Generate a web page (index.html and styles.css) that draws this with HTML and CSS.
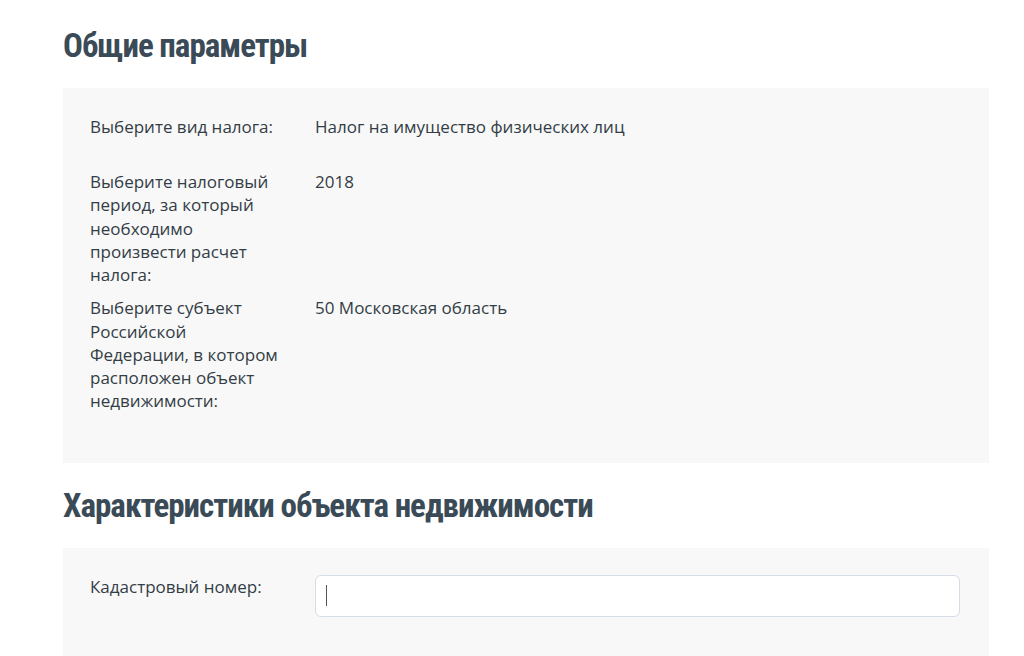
FILE: index.html
```html
<!DOCTYPE html>
<html lang="ru">
	<head>
		<title>Калькулятор налога</title>
		<meta charset="utf-8">
		<link rel="stylesheet" href="styles.css">
	</head>
	<body>
		<div id="calc">
			<h2 class="section-title">Общие параметры</h2>
			<div class="panel">
				<div class="row">
					<div class="label">Выберите вид налога:</div>
					<div class="value">Налог на имущество физических лиц</div>
				</div>
				<div class="row">
					<div class="label">Выберите налоговый период, за который необходимо произвести расчет налога:</div>
					<div class="value">2018</div>
				</div>
				<div class="row">
					<div class="label">Выберите субъект Российской Федерации, в котором расположен объект недвижимости:</div>
					<div class="value">50 Московская область</div>
				</div>
			</div>
			<h2 class="section-title">Характеристики объекта недвижимости</h2>
			<div class="panel">
				<div class="row">
					<div class="label">Кадастровый номер:</div>
					<div class="value">
						<div class="field"><span class="caret"></span></div>
					</div>
				</div>
			</div>
		</div>
	</body>
</html>
```

FILE: styles.css
```css
html, body {
	margin: 0;
	background-color: #FFFFFF;
}
body {
	color: #333D45;
	font-family: 'Open Sans', sans-serif;
	font-size: 17px;
	line-height: 23.25px;
}

#calc {
	width: 926px;
	padding: 26px 0 0 63px;
}
.section-title {
	margin: 0 0 22px 0;
	font-family: 'Roboto Condensed', Roboto, sans-serif;
	font-size: 33px;
	font-weight: 700;
	line-height: 40px;
	letter-spacing: -1px;
	color: #3A4B57;
}
.panel + .section-title {
	margin-top: 23px;
}
.panel {
	background-color: #F8F8F8;
	padding: 27px 29px 40px 27px;
}
.row {
	display: flex;
	min-height: 45px;
	margin-bottom: 10px;
}
.label {
	flex: 0 0 190px;
	margin-right: 35px;
}
.value {
	flex: 1 1 auto;
}
.field {
	display: flex;
	align-items: center;
	box-sizing: border-box;
	height: 42px;
	padding: 0 10px;
	border: 1px solid #D5DDE6;
	border-radius: 6px;
	background-color: #FFFFFF;
}
.caret {
	display: block;
	width: 1px;
	height: 21px;
	background-color: #555555;
}
```
